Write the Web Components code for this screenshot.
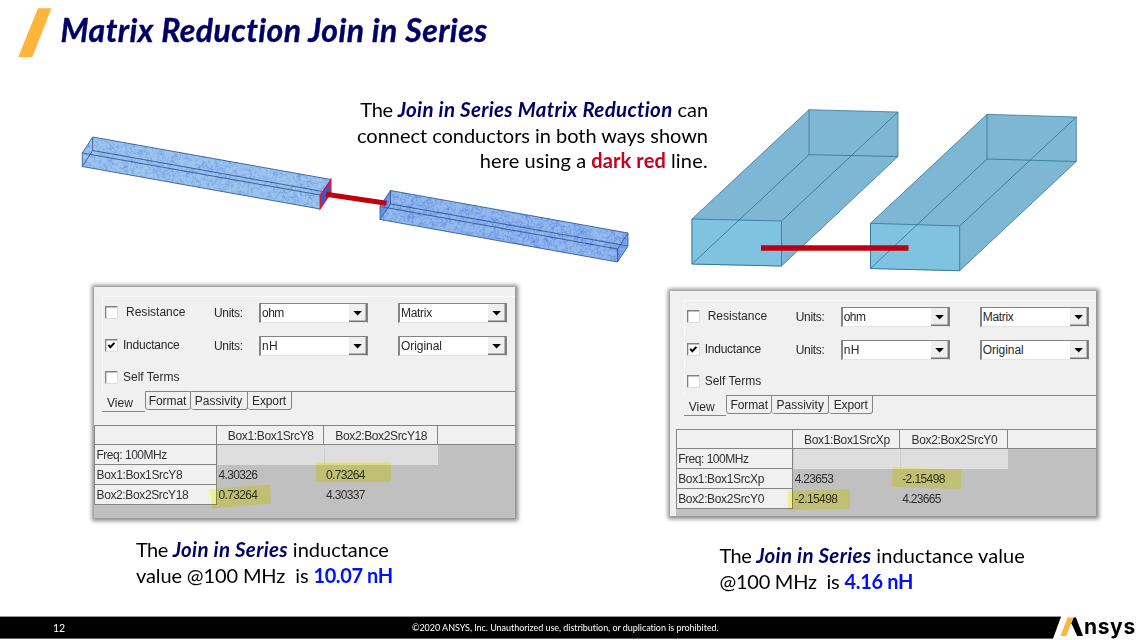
<!DOCTYPE html>
<html lang="en">
<head>
<meta charset="utf-8">
<title>Matrix Reduction Join in Series</title>
<style>
html,body{margin:0;padding:0;background:#fff}
body{width:1140px;height:640px;overflow:hidden;font-family:Lato,"Open Sans",sans-serif}
</style>
</head>
<body>
<slide-page></slide-page>
<script>
const define = (name, html, setup) => {
  const tpl = document.createElement('template');
  tpl.innerHTML = html;
  customElements.define(name, class extends HTMLElement {
    connectedCallback() {
      if (this.shadowRoot) return;
      this.attachShadow({mode: 'open'}).append(tpl.content.cloneNode(true));
      if (setup) setup.call(this, this.shadowRoot);
    }
  });
};

// Text run tracked to an exact advance width (attribute w, px).
const runs = [];
define('t-run', `<style>:host{display:inline-block;white-space:pre;flex:none;justify-self:start}</style><slot></slot>`, function () { runs.push(this); });
const fitRuns = () => {
  for (const el of runs) {
    const w = parseFloat(el.getAttribute('w'));
    const n = el.textContent.length;
    if (w) el.style.letterSpacing = ((w - el.getBoundingClientRect().width) / (n - .5)).toFixed(3) + 'px';
  }
};

define('slide-header', `<style>
:host{display:flex;height:66px;align-items:flex-start}
svg{flex:none;width:60.5px;height:66px}
h1{margin:0;padding-top:11px;font:italic 700 32px/38px Lato,sans-serif;color:#000066;-webkit-text-stroke:.35px #000066}
</style>
<svg viewBox="0 0 60.5 66"><polygon points="38,8.3 51.5,8.3 32.3,57 18.2,57" fill="#ffb43c"/></svg>
<h1><t-run w="426.5"></t-run></h1>`, function (r) {
  r.querySelector('t-run').textContent = this.getAttribute('label');
});

// Two long meshed bars joined end to end.
define('meshed-bars', `<style>:host{display:block;width:560px;height:150px}svg{display:block}</style>
<svg width="560" height="150" viewBox="76 126 560 150">
<defs>
<clipPath id="a"><polygon points="92.7,137 331,179.5 331,193 320,209 82.3,166.5 82.3,153"/></clipPath>
<clipPath id="b"><polygon points="390.5,190.5 628,233 628,246 617.5,262 380,219.5 380,206.5"/></clipPath>
</defs>
<g clip-path="url(#a)"><rect x="76" y="126" width="270" height="100" fill="#9cc4ee"/><path class="mesh" data-x="80" data-y="137" fill="none" stroke="#527fdc" stroke-opacity=".4" stroke-width=".6"/></g>
<g clip-path="url(#b)"><rect x="370" y="180" width="270" height="100" fill="#92b8ee"/><path class="mesh" data-x="378" data-y="190" fill="none" stroke="#426fdc" stroke-opacity=".42" stroke-width=".65"/></g>
<g fill="none" stroke="#234f86" stroke-width=".8">
<path d="M92.7,137L331,179.5M320,209L82.3,166.5V153L92.7,137V150.5L82.3,166.5M92.7,150.5L331,193M82.3,153L320,195"/>
<path d="M390.5,190.5L628,233V246L617.5,262L380,219.5V206.5L390.5,190.5V204L380,219.5M390.5,204L628,246M380,206.5L617.5,249V262M617.5,249L628,233"/>
</g>
<polygon points="380,206.5 390.5,190.5 390.5,204 380,219.5" fill="#416ad8" fill-opacity=".45"/>
<polygon points="617.5,249 628,233 628,246 617.5,262" fill="#416ad8" fill-opacity=".2"/>
<polygon points="320.3,195.5 330.8,180 330.8,192.7 320.3,208.3" fill="#2b61c4" stroke="#d81640" stroke-width="1.5"/>
<path d="M326,194.2L386.5,203.3" stroke="#c00010" stroke-width="5"/>
</svg>`, function (r) {
  let s = 11;
  const rnd = () => (s = (s * 16807) % 2147483647) / 2147483647;
  r.querySelectorAll('.mesh').forEach(p => {
    const x0 = +p.dataset.x, y0 = +p.dataset.y;
    let d = '';
    for (let i = 0; i < 950; i++) {
      const u = rnd() * 252, x = x0 + u, y = y0 + u * .179 - 3 + rnd() * 34;
      const a = rnd() * 6.28, l = 3 + rnd() * 4;
      d += `M${x.toFixed(1)},${y.toFixed(1)}l${(Math.cos(a) * l).toFixed(1)},${(Math.sin(a) * l).toFixed(1)}`;
    }
    p.setAttribute('d', d);
  });
});

// Two translucent blocks lying side by side.
define('solid-blocks', `<style>:host{display:block;width:400px;height:175px}svg{display:block}</style>
<svg width="400" height="175" viewBox="685 102 400 175">
<g stroke="#1f6688" stroke-opacity=".75" stroke-width=".9" stroke-linejoin="round">
<polygon points="692,219 809,109.7 898,112 898,156.5 781.5,266 692,264" fill="#7eb7d4"/>
<polygon points="692,219 781.5,221 781.5,266 692,264" fill="#80c3e0"/>
<path fill="none" d="M809,109.7V154.7L898,156.5M809,154.7L692,264M781.5,221L898,112"/>
<polygon points="870.5,223.3 987,114.3 1076.3,117 1076.3,161.5 959.7,270.7 870.5,268.5" fill="#7eb7d4"/>
<polygon points="870.5,223.3 959.7,226 959.7,270.7 870.5,268.5" fill="#80c3e0"/>
<path fill="none" d="M987,114.3V159L1076.3,161.5M987,159L870.5,268.5M959.7,226L1076.3,117"/>
</g>
<path d="M761,248H908.5" stroke="#c00010" stroke-width="5.6"/>
</svg>`);

define('rich-lines', `<style>
:host{display:flex;flex-direction:column;font-size:20px;line-height:25.7px;color:#000}
</style><slot></slot>`);
define('rich-line', `<style>
:host{display:flex;gap:5px;white-space:pre}
:host([end]){justify-content:flex-end}
::slotted(.k){font-weight:700;font-style:italic;font-size:20.5px;color:#000066}
::slotted(.r){font-weight:700;color:#c8001e}
::slotted(.b){font-weight:700;color:#0010ff}
</style><slot></slot>`);

define('check-item', `<style>
:host{display:flex;align-items:center;gap:var(--gap,5px);margin-top:-2px}
svg{flex:none;display:block}
</style>
<svg width="13" height="13" viewBox="0 0 13 13"><rect width="13" height="13" fill="#fff"/><path d="M.6,12.5V.7H12.5" fill="none" stroke="#808080" stroke-width="1.4"/><path d="M12.5,1V12.5H1" fill="none" stroke="#dcdcdc"/><path class="t" d="M3.3,5.9L5.3,8.2L9.4,3.9" fill="none" stroke="#000" stroke-width="2"/></svg><slot></slot>`, function (r) {
  if (!this.hasAttribute('checked')) r.querySelector('.t').remove();
});

define('select-box', `<style>
:host{display:flex;box-sizing:border-box;width:109px;height:20px;background:#fff;border:1px solid #848484;border-width:1.5px 1px 1px 2px;border-bottom-color:#e4e4e4;align-items:stretch}
div{flex:1;padding-left:1px;line-height:18px;white-space:nowrap}
svg{flex:none;display:block;margin:0}
</style><div><slot></slot></div>
<svg width="18" height="18" viewBox="0 0 18 18"><rect width="18" height="18" fill="#efefef"/><path d="M0,17.2H17.3V0" fill="none" stroke="#777" stroke-width="1.5"/><path d="M4.3,7H12.9L8.6,11.5Z" fill="#000"/></svg>`);

define('tab-item', `<style>
:host{display:block;box-sizing:border-box;height:19px;border:1.5px solid #858585;border-left:0;border-radius:0 0 3px 3px;text-align:center;line-height:18px;background:#f0f0f0}
:host([active]){height:21px;border-top-color:transparent;border-right:0;border-radius:0;line-height:23px;text-align:left;padding-left:5px}
:host([first]){border-left:1.5px solid #858585}
</style><slot></slot>`);

define('result-panel', `<style>
:host{display:block;position:relative;box-sizing:border-box;background:#f0f0f0;color:#28282c;font:12px/16px "Liberation Sans",Arial,sans-serif;box-shadow:0 0 4px 2.5px #8b8b8b}
.in{padding-left:var(--inset,0px);display:flex;flex-direction:column;height:100%}
.opts{margin:9px 0 0 8px;height:95px;border:1px solid #fafafa;border-width:1px 0 0 1px;box-sizing:border-box;padding:6px 0 0 2px;display:grid;grid-template:20px 20px 20px/109px 45px 139px 109px;row-gap:13px;align-items:center}
.self{margin-top:-4px}
.tabs{display:flex;margin-left:8px;height:33.8px;align-items:flex-start}
.rest{flex:1;border-top:1.5px solid #858585}
.table{display:grid;grid-template-columns:var(--cols) 1fr;grid-template-rows:20.4px 19.8px 20px 20px;background:#c0c0c0;line-height:17px;color:#303034}
.table>div{box-sizing:border-box;padding:2px 0 0 2px;white-space:nowrap}
.h{background:#f0f0f0;border-top:1.5px solid #858585;border-bottom:1.5px solid #858585;border-right:1.5px solid #858585;text-align:center}
.h.last{border-right:0}
.l{background:#f0f0f0;border-bottom:1.5px solid #858585;border-right:1.5px solid #858585}
.l,.h.first{border-left:1px solid #858585}
.table>.l{padding-left:1.5px}
.f{background:#dedede;border-left:1px solid #d0d0d0}
.fill{flex:1;background:#c0c0c0}
svg{position:absolute;inset:0;width:100%;height:100%;mix-blend-mode:multiply}
</style>
<div class="in">
<div class="opts">
<check-item style="--gap:8px"><t-run w="59.5">Resistance</t-run></check-item><t-run w="29">Units:</t-run><select-box><t-run w="22">ohm</t-run></select-box><select-box><t-run w="31">Matrix</t-run></select-box>
<check-item checked><t-run w="56.5">Inductance</t-run></check-item><t-run w="29">Units:</t-run><select-box><t-run w="16">nH</t-run></select-box><select-box><t-run w="41">Original</t-run></select-box>
<check-item class="self"><t-run w="56.5">Self Terms</t-run></check-item>
</div>
<div class="tabs"><tab-item active style="width:42.5px"><t-run w="26">View</t-run></tab-item><tab-item first style="width:46px"><t-run w="37.5">Format</t-run></tab-item><tab-item style="width:57px"><t-run w="47.5">Passivity</t-run></tab-item><tab-item style="width:44px"><t-run w="34">Export</t-run></tab-item><div class="rest"></div></div>
<div class="table"></div><div class="fill"></div>
</div>
<svg><polygon fill="#ffff80" fill-opacity=".78"/><polygon fill="#ffff80" fill-opacity=".78"/></svg>`, function (r) {
  const c = JSON.parse(this.getAttribute('data'));
  const run = ([t, w]) => `<t-run w="${w}">${t}</t-run>`;
  const cell = (k, t) => `<div class="${k}">${t ? run(t) : ''}</div>`;
  r.querySelector('.table').innerHTML =
    cell('h first') + cell('h', c.head[0]) + cell('h', c.head[1]) + cell('h last') +
    cell('l', ['Freq: 100MHz', 70.5]) + cell('f') + cell('f') + cell('') +
    c.rows.map(x => cell('l', x[0]) + cell('', x[1]) + cell('', x[2]) + cell('')).join('');
  r.querySelectorAll('polygon').forEach((p, i) => p.setAttribute('points', c.marks[i]));
});

define('slide-footer', `<style>
:host{display:grid;grid-template-columns:53px 359px 1fr 88px;height:24px;color:#fff;background:linear-gradient(#999 0 1px,#000 1px 22px,#666 22px 23px,#fff 23px);align-items:start}
span{font-size:10.5px;line-height:24px;white-space:nowrap}
.c{font-size:9px}
.logo{display:flex;height:24px;color:#000}
.logo svg{flex:none;display:block}
.logo span{background:#fff;height:24px;flex:1;font:700 21px/21px Inter,sans-serif}
</style>
<div></div><span><t-run w="12">12</t-run></span><span class="c"><t-run w="307">©2020 ANSYS, Inc. Unauthorized use, distribution, or duplication is prohibited.</t-run></span>
<div class="logo"><svg width="32" height="24" viewBox="1052 616 32 24"><path d="M1061.3,616H1084V640H1052.5Z" fill="#fff"/><path d="M1067.6,617.5H1073.2L1066.2,636H1060.5Z" fill="#ffb43c"/><path d="M1071.4,623.2L1073.6,617.5H1076L1083,636H1077.2Z" fill="#000"/></svg><span><t-run w="51.5">nsys</t-run></span></div>`);

define('slide-page', `<style>
:host{display:flex;flex-direction:column;width:1140px;height:640px;background:#fff;overflow:hidden}
.figs{display:grid;grid-template-columns:632px 1fr;height:221px;padding-left:76px;box-sizing:border-box}
meshed-bars{grid-area:1/1;margin-top:60px}
.intro{grid-area:1/1;justify-self:end;margin-top:31px;align-self:start}
solid-blocks{grid-area:1/2;margin:36px 0 0 -23px}
.panels{display:flex;height:249px;padding-left:94px;gap:155px;align-items:flex-start}
.p1{width:421px;height:231px;--cols:122.5px 107.5px 113.5px}
.p2{width:426px;height:224.5px;margin-top:4px;--inset:5.7px;--cols:117px 107.5px 107.5px}
.caps{display:flex;flex:1;padding-left:136px}
.c1{width:583.5px;margin-top:1px}.c2{margin-top:7px}
slide-footer{flex:none}
</style>
<slide-header label="Matrix Reduction Join in Series"></slide-header>
<div class="figs">
<meshed-bars></meshed-bars>
<rich-lines class="intro">
<rich-line end><t-run w="32.5">The</t-run><t-run class="k" w="274.5">Join in Series Matrix Reduction</t-run><t-run w="30.5">can</t-run></rich-line>
<rich-line end><t-run w="351">connect conductors in both ways shown</t-run></rich-line>
<rich-line end><t-run w="106.5">here using a</t-run><t-run class="r" w="74.5">dark red</t-run><t-run w="37">line.</t-run></rich-line>
</rich-lines>
<solid-blocks></solid-blocks>
</div>
<div class="panels">
<result-panel class="p1" data='{"head":[["Box1:Box1SrcY8",86],["Box2:Box2SrcY18",92]],"rows":[[["Box1:Box1SrcY8",86],["4.30326",39],["0.73264",39]],[["Box2:Box2SrcY18",92],["0.73264",39],["4.30337",39]]],"marks":["222,175.5 297,175.5 297,195 222,195","116,202 176.5,197.5 177,216.5 118,221.5"]}'></result-panel>
<result-panel class="p2" data='{"head":[["Box1:Box1SrcXp",86],["Box2:Box2SrcY0",86]],"rows":[[["Box1:Box1SrcXp",86],["4.23653",39],["-2.15498",43]],[["Box2:Box2SrcY0",86],["-2.15498",43],["4.23665",39]]],"marks":["222.5,176 291,179 291,198 222,196","118,200 180,198 180,218 118,219"]}'></result-panel>
</div>
<div class="caps">
<rich-lines class="c1">
<rich-line><t-run w="32">The</t-run><t-run class="k" w="115">Join in Series</t-run><t-run w="96">inductance</t-run></rich-line>
<rich-line><t-run w="172.5">value @100 MHz  is</t-run><t-run class="b" w="79.5">10.07 nH</t-run></rich-line>
</rich-lines>
<rich-lines class="c2">
<rich-line><t-run w="32">The</t-run><t-run class="k" w="115">Join in Series</t-run><t-run w="148.5">inductance value</t-run></rich-line>
<rich-line><t-run w="120">@100 MHz  is</t-run><t-run class="b" w="69">4.16 nH</t-run></rich-line>
</rich-lines>
</div>
<slide-footer></slide-footer>`);
fitRuns();
</script>
</body>
</html>
